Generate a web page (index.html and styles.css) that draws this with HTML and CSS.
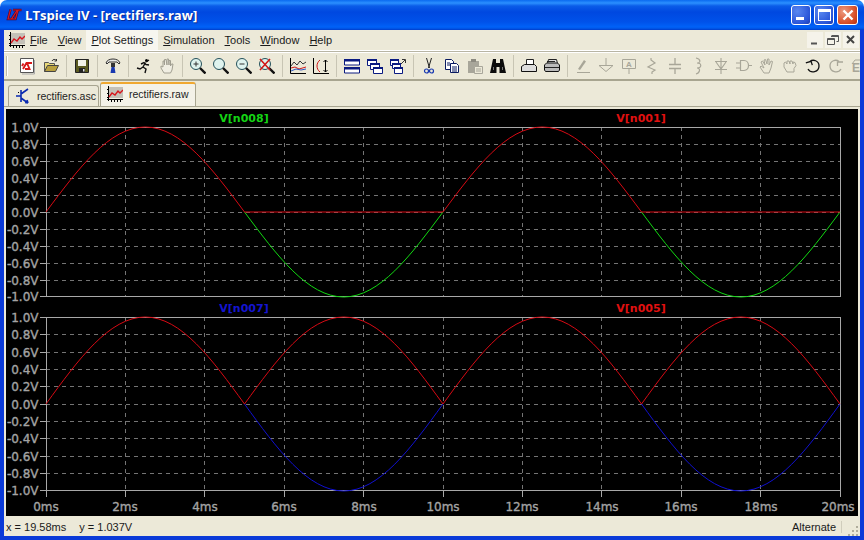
FILE: index.html
```html
<!DOCTYPE html>
<html lang="en">
<head>
<meta charset="utf-8">
<title>LTspice IV - [rectifiers.raw]</title>
<link rel="stylesheet" href="styles.css">
</head>
<body>
<svg class="defs" width="0" height="0" aria-hidden="true">
  <symbol id="i-plot" viewBox="0 0 16 16">
    <rect x="1" y="1" width="15" height="11" fill="#c4c1b8"/>
    <path d="M1.500 0v15M0 13.500h16M4.500 13v3M7.500 13v3M10.500 13v3M13.500 13v3M0 3.500h1M0 7.500h1M0 11.500h1" stroke="#000" fill="none"/>
    <path d="M2 11l3-4 3 2 3-4 2 2 3-3" stroke="#d8141c" stroke-width="1.300" fill="none"/>
  </symbol>
  <symbol id="i-mag" viewBox="0 0 16 16">
    <circle cx="6" cy="6" r="5.500" fill="#dff3ee" stroke="#24505a"/>
    <path d="M10 10l5.500 5.500" stroke="#111" stroke-width="2.400"/>
  </symbol>
</svg>

<div class="window">
  <header class="titlebar">
    <svg class="app-logo" viewBox="0 0 16 12" width="16" height="13"><path d="M4.500 1L2 10.500h6M7 1.500h8.500M12 1.500L9.500 10.500H5.500L11 2" fill="none" stroke="#3a0a40" stroke-width="2.400"/><path d="M4.500 1L2 10.500h6M7 1.500h8.500M12 1.500L9.500 10.500H5.500L11 2" fill="none" stroke="#d81820" stroke-width="1.200"/></svg>
    <span class="title">LTspice IV - [rectifiers.raw]</span>
    <div class="caption-buttons">
      <span class="cap cap-min"><i class="glyph-min"></i></span>
      <span class="cap cap-max"><i class="glyph-max"></i></span>
      <span class="cap cap-close"><svg viewBox="0 0 12 12" width="12" height="12"><path d="M1.500 1.500l9 9M10.500 1.500l-9 9" stroke="#fff" stroke-width="2.400"/></svg></span>
    </div>
  </header>

  <div class="frame">
    <nav class="menubar">
      <svg class="menu-icon" width="16" height="16"><use href="#i-plot"/></svg>
      <span class="menu"><u>F</u>ile</span>
      <span class="menu"><u>V</u>iew</span>
      <span class="menu menu-on"><u>P</u>lot Settings</span>
      <span class="menu"><u>S</u>imulation</span>
      <span class="menu"><u>T</u>ools</span>
      <span class="menu"><u>W</u>indow</span>
      <span class="menu"><u>H</u>elp</span>
      <div class="mdi-buttons">
        <span class="mdi"><svg viewBox="0 0 16 16" width="16" height="16"><path d="M4 11.500h6" stroke="#555" stroke-width="2"/></svg></span>
        <span class="mdi"><svg viewBox="0 0 16 16" width="16" height="16"><path d="M6.500 3.500h7v6h-2M6 4.500h7M2.500 6.500h7v6h-7zM2 7.500h8" fill="none" stroke="#555"/></svg></span>
        <span class="mdi"><svg viewBox="0 0 16 16" width="16" height="16"><path d="M4 4l7 7M11 4l-7 7" stroke="#444" stroke-width="2"/></svg></span>
      </div>
    </nav>

    <div class="toolbar">
      <span class="grip"></span>
      <span class="tb"><svg viewBox="0 0 16 16"><path d="M.5.500h13v14h-13z" fill="#fff" stroke="#555"/><path d="M14.500 2v14H2" fill="none" stroke="#aaa"/><path d="M3 11l3.500-6H12M5 11h4.500L7 5M3.500 5.500L2 8" fill="none" stroke="#d81818" stroke-width="1.900"/></svg></span>
      <span class="tb"><svg viewBox="0 0 16 16"><path d="M1.500 13.500v-9h4l1 1h5v2" fill="#e8d878" stroke="#555"/><path d="M1.500 13.500l3-6h11l-3 6z" fill="#b8a040" stroke="#444"/><path d="M9 3c1-2 3-2 4.500-.5M13.500 1v2h-2" fill="none" stroke="#333"/></svg></span>
      <span class="sep"></span>
      <span class="tb"><svg viewBox="0 0 16 16"><path d="M1.500 1.500h13v13h-13z" fill="#5a5a20" stroke="#222"/><rect x="4" y="2" width="8" height="6" fill="#f2f2e8"/><rect x="5" y="10" width="6" height="4" fill="#222"/><rect x="9" y="11" width="1.500" height="2.500" fill="#ddd"/></svg></span>
      <span class="sep"></span>
      <span class="tb"><svg viewBox="0 0 16 16"><path d="M1 5c1-3 4-4 7-4s6 1 7 4l-1 1-2-2H4L2 6z" fill="#e8e8e4" stroke="#333"/><path d="M6 5h4v4H6z" fill="#333"/><path d="M6.500 9h3l1 6h-5z" fill="#1838b0"/></svg></span>
      <span class="sep"></span>
      <span class="tb"><svg viewBox="0 0 16 16"><circle cx="10.500" cy="2.500" r="1.500"/><path d="M9.500 4.500L7 9l3 2-1 4M7 9l-3 2-3-1M5 6l3-1.500 2 2 3 .5M10 4l3-2" fill="none" stroke="#111" stroke-width="1.400"/></svg></span>
      <span class="tb"><svg viewBox="0 0 16 16"><path d="M5 15l-3-5V8l2 1V3l1 0 .5 4V1.500h1.500L8 7V1h1.500L10 7V2.500h1.500V8l1-2h1.500l-1 6-1.500 3z" fill="#f0eee2" stroke="#a09e90"/></svg></span>
      <span class="sep"></span>
      <span class="tb"><svg width="16" height="16"><use href="#i-mag"/><path d="M3.500 6h5M6 3.500v5" stroke="#333"/></svg></span>
      <span class="tb"><svg width="16" height="16"><use href="#i-mag"/></svg></span>
      <span class="tb"><svg width="16" height="16"><use href="#i-mag"/><path d="M3.500 6h5" stroke="#333"/></svg></span>
      <span class="tb"><svg width="16" height="16"><use href="#i-mag"/><path d="M1 1l10 11M11 1L1 12" stroke="#d01818" stroke-width="1.600"/></svg></span>
      <span class="sep"></span>
      <span class="tb"><svg viewBox="0 0 16 16"><path d="M.5 0v15.500H16M0 3.500h1M0 7.500h1M0 11.500h1M4.500 15v1M8.500 15v1M12.500 15v1" stroke="#000" fill="none"/><path d="M1 8l3-4 3 3 3-4 3 3 3-2" stroke="#333" fill="none"/><path d="M1 10l4-1 4 2 7-2" stroke="#d01818" fill="none"/><path d="M1 13l5-2 5 1 5-1" stroke="#3058c0" fill="none"/></svg></span>
      <span class="tb"><svg viewBox="0 0 16 16"><path d="M.5 0v15.500H16M0 3.500h1M0 7.500h1M0 11.500h1M4.500 15v1M8.500 15v1M12.500 15v1" stroke="#000" fill="none"/><path d="M7 2C3 5 3 11 7 14" stroke="#d01818" fill="none"/><path d="M12.500 2v12M10.500 4l2-2 2 2M10.500 12l2 2 2-2" stroke="#000" fill="none"/></svg></span>
      <span class="sep"></span>
      <span class="tb"><svg viewBox="0 0 16 16"><path d="M.5 1.500h15v5.500H.5zM.5 9.500h15v5.500H.5z" fill="#fff" stroke="#0a1a80"/><rect x="0" y="1" width="16" height="2.500" fill="#0a1a80"/><rect x="0" y="9" width="16" height="2.500" fill="#0a1a80"/></svg></span>
      <span class="tb"><svg viewBox="0 0 16 16"><g fill="#fff" stroke="#0a1a80"><path d="M.5 1.500h9v6h-9z"/><path d="M3.500 5.500h9v6h-9z"/><path d="M6.500 9.500h9v6h-9z"/></g><path d="M0 1h10v2H0zM3 5h10v2H3zM6 9h10v2H6z" fill="#0a1a80"/></svg></span>
      <span class="tb"><svg viewBox="0 0 16 16"><g fill="#fff" stroke="#0a1a80"><path d="M.5 1.500h8v6h-8z"/><path d="M2.500 5.500h8v5h-8z"/><path d="M4.500 9.500h8v6h-8z"/></g><path d="M0 1h9v2H0zM2 5h9v2H2zM4 9h9v2H4z" fill="#0a1a80"/><path d="M11 6l4-4M12 1.500h3.500V5" fill="none" stroke="#333"/></svg></span>
      <span class="sep"></span>
      <span class="tb"><svg viewBox="0 0 16 16"><path d="M5.500 0l3 10M10.500 0l-3 10" stroke="#222" fill="none"/><circle cx="5.500" cy="13" r="2" fill="none" stroke="#1838b0" stroke-width="1.200"/><circle cx="10.500" cy="13" r="2" fill="none" stroke="#1838b0" stroke-width="1.200"/></svg></span>
      <span class="tb"><svg viewBox="0 0 16 16"><path d="M1.500 1.500h6l2 2v8h-8z" fill="#fff" stroke="#0a1a60"/><path d="M6.500 5.500h6l2 2v7h-8z" fill="#fff" stroke="#0a1a60"/><path d="M3 5h3M3 7h3M8 9h5M8 11h5M8 13h5" stroke="#0a1a60"/></svg></span>
      <span class="tb"><svg viewBox="0 0 16 16"><path d="M1 3h11v12H1z" fill="#a8a69a"/><rect x="4" y="1" width="5" height="3" fill="#8c8a80"/><path d="M7.500 8.500h8v7h-8z" fill="#ece9d8" stroke="#a8a69a"/><path d="M9 11h5M9 13h5" stroke="#a8a69a"/></svg></span>
      <span class="tb"><svg viewBox="0 0 16 16"><path d="M3 1h3v4h4V1h3l3 14H9.500V9h-3v6H0z" fill="#0c0c0c"/><path d="M3 9h1v3H3zM12 9h1v3h-1z" fill="#777"/></svg></span>
      <span class="sep"></span>
      <span class="tb"><svg viewBox="0 0 16 16"><path d="M5.500 1.500h7v6h-7z" fill="#fff" stroke="#222"/><path d="M.5 8.500l3-2h10l2 2v5H.5z" fill="#ddd" stroke="#111"/></svg></span>
      <span class="tb"><svg viewBox="0 0 16 16"><path d="M4.500 1.500h8l1 4h-10z" fill="#ddd" stroke="#222"/><path d="M.5 7l2-2h11l2 2v5l-1 1.500H1.500L.5 12z" fill="#bbb" stroke="#111"/><path d="M1 9.500h14M3 3.500h8" stroke="#222"/></svg></span>
      <span class="sep"></span>
      <span class="tb dim"><svg viewBox="0 0 16 16"><path d="M3 11l6-9 2 1.500L5 12z" fill="#a8a698"/><path d="M2 14.500h13" stroke="#a8a698"/></svg></span>
      <span class="tb dim"><svg viewBox="0 0 16 16"><path d="M8 0v7M1 7.500h14L8 13.500z" fill="none" stroke="#a8a698"/></svg></span>
      <span class="tb dim"><svg viewBox="0 0 16 16"><path d="M1.500 1.500h13v9h-13zM8 10.500V16" fill="none" stroke="#a8a698"/><text x="8" y="9" class="ico-letter">A</text></svg></span>
      <span class="tb dim"><svg viewBox="0 0 16 16"><path d="M7 0v2l4 3-7 4 7 3-3 2v2" fill="none" stroke="#a8a698" stroke-width="1.200"/></svg></span>
      <span class="tb dim"><svg viewBox="0 0 16 16"><path d="M8 0v6.500M2 6.500h12M2 10.500h12M8 10.500V16" fill="none" stroke="#a8a698" stroke-width="1.300"/></svg></span>
      <span class="tb dim"><svg viewBox="0 0 16 16"><path d="M6 0c5 1 5 5 1 5 5 0 5 5 0 5 4 0 3 5-1 6" fill="none" stroke="#a8a698" stroke-width="1.200"/></svg></span>
      <span class="tb dim"><svg viewBox="0 0 16 16"><path d="M8 0v16M2 3.500h12M2 11.500h12M3 4l5 7 5-7" fill="none" stroke="#a8a698" stroke-width="1.100"/></svg></span>
      <span class="tb dim"><svg viewBox="0 0 16 16"><path d="M4.500 2.500H8c6 0 6 10 0 10H4.500zM0 5h4M0 10h4M12 7.500h4" fill="none" stroke="#a8a698" stroke-width="1.200"/></svg></span>
      <span class="tb dim"><svg viewBox="0 0 16 16"><path d="M5 15L1 9l1-1 3 2L2 4l1.500-1L6 7 5 2l1.500-.5L8 6l.5-5H10v6l2-4 1.500.5L12 10l-2 5z" fill="none" stroke="#a8a698"/></svg></span>
      <span class="tb dim"><svg viewBox="0 0 16 16"><path d="M5 14L2 9V5l1.500-1L5 6V3h2l1 3V3h2l1 3V4l2 .5 1 3-2 3V14z" fill="none" stroke="#a8a698"/></svg></span>
      <span class="tb"><svg viewBox="0 0 16 16"><path d="M5 3.500c3-2.500 9-1 9 4.500 0 6-8 8-11 3" fill="none" stroke="#111" stroke-width="1.300"/><path d="M1 4h5.500v4" fill="none" stroke="#111" stroke-width="1.300" transform="rotate(-18 4 5)"/></svg></span>
      <span class="tb dim"><svg viewBox="0 0 16 16"><path d="M11 3.500c-3-2.500-9-1-9 4.500 0 6 8 8 11 3" fill="none" stroke="#a8a698" stroke-width="1.300"/><path d="M15 4H9.500v4" fill="none" stroke="#a8a698" stroke-width="1.300"/></svg></span>
      <span class="tb dim"><svg viewBox="0 0 16 16"><path d="M1 6l3-4h6" fill="none" stroke="#a8a698"/><text x="1" y="14" class="ico-letter ico-big">E</text></svg></span>
    </div>

    <div class="tabstrip">
      <span class="tab">
        <svg viewBox="0 0 16 16" width="16" height="16"><path d="M0 8h5M5 2v12M5 6l7-5M5 10l7 5M12 15l-3-.5M12 15l-1-3" fill="none" stroke="#0a2ab0" stroke-width="1.600"/><path d="M2 4l1 1" stroke="#000"/></svg>
        rectifiers.asc
      </span>
      <span class="tab tab-on">
        <svg width="16" height="16"><use href="#i-plot"/></svg>
        rectifiers.raw
      </span>
    </div>

    <div class="plot-frame">
      <svg class="plot" viewBox="6 109 852 407" width="852" height="407" role="img" aria-label="Waveform plot">
        <g class="grid">
          <path d="M125.500 127V296M204.500 127V296M284.500 127V296M363.500 127V296M443.500 127V296M522.500 127V296M601.500 127V296M681.500 127V296M760.500 127V296"/>
          <path d="M46 144.500H840M46 161.500H840M46 178.500H840M46 195.500H840M46 212.500H840M46 229.500H840M46 246.500H840M46 263.500H840M46 280.500H840"/>
          <path d="M125.500 317V490M204.500 317V490M284.500 317V490M363.500 317V490M443.500 317V490M522.500 317V490M601.500 317V490M681.500 317V490M760.500 317V490"/>
          <path d="M46 334.500H840M46 352.500H840M46 369.500H840M46 386.500H840M46 404.500H840M46 421.500H840M46 438.500H840M46 456.500H840M46 473.500H840"/>
        </g>
        <g class="frame-lines">
          <rect x="46.500" y="127.500" width="794" height="169"/>
          <rect x="46.500" y="317.500" width="794" height="173"/>
          <path d="M40 127.500h6M40 144.500h6M40 161.500h6M40 178.500h6M40 195.500h6M40 212.500h6M40 229.500h6M40 246.500h6M40 263.500h6M40 280.500h6M40 296.500h6"/>
          <path d="M40 317.500h6M40 334.500h6M40 352.500h6M40 369.500h6M40 386.500h6M40 404.500h6M40 421.500h6M40 438.500h6M40 456.500h6M40 473.500h6M40 490.500h6"/>
          <path d="M46.500 491v6M125.500 491v6M204.500 491v6M284.500 491v6M363.500 491v6M443.500 491v6M522.500 491v6M601.500 491v6M681.500 491v6M760.500 491v6M840.500 491v6"/>
        </g>

        <g class="trace tr-green">
          <path d="M244.500 212c32.370 43.500 63.330 85 99.250 85c35.920 0 66.880-41.500 99.250-85"/>
          <path d="M641.500 212c32.370 43.500 63.330 85 99.250 85c35.920 0 66.880-41.500 99.250-85"/>
        </g>
        <g class="trace tr-red">
          <path d="M46 212c32.370-43.500 63.330-85 99.250-85c35.920 0 66.880 41.500 99.250 85H443c32.370-43.500 63.330-85 99.250-85c35.920 0 66.880 41.500 99.250 85H840"/>
        </g>
        <g class="trace tr-blue">
          <path d="M244.500 404c32.370 44.570 63.330 87 99.250 87c35.920 0 66.880-42.430 99.250-87"/>
          <path d="M641.500 404c32.370 44.570 63.330 87 99.250 87c35.920 0 66.880-42.430 99.250-87"/>
        </g>
        <g class="trace tr-red">
          <path d="M46 404c32.370-44.570 63.330-87 99.250-87c35.920 0 66.880 42.430 99.250 87c32.370-44.570 63.330-87 99.250-87c35.920 0 66.880 42.430 99.250 87c32.370-44.570 63.330-87 99.250-87c35.920 0 66.880 42.430 99.250 87c32.370-44.570 63.330-87 99.250-87c35.920 0 66.880 42.430 99.250 87"/>
        </g>

        <g class="trace-names">
          <text x="244" y="122" class="n-green">V[n008]</text>
          <text x="641" y="122" class="n-red">V[n001]</text>
          <text x="244" y="312" class="n-blue">V[n007]</text>
          <text x="641" y="312" class="n-red">V[n005]</text>
        </g>
        <g class="y-labels">
          <text x="38.500" y="132">1.0V</text><text x="38.500" y="149">0.8V</text><text x="38.500" y="166">0.6V</text><text x="38.500" y="183">0.4V</text><text x="38.500" y="200">0.2V</text><text x="38.500" y="217">0.0V</text><text x="38.500" y="234">-0.2V</text><text x="38.500" y="251">-0.4V</text><text x="38.500" y="268">-0.6V</text><text x="38.500" y="285">-0.8V</text><text x="38.500" y="301">-1.0V</text>
          <text x="38.500" y="322">1.0V</text><text x="38.500" y="339">0.8V</text><text x="38.500" y="357">0.6V</text><text x="38.500" y="374">0.4V</text><text x="38.500" y="391">0.2V</text><text x="38.500" y="409">0.0V</text><text x="38.500" y="426">-0.2V</text><text x="38.500" y="443">-0.4V</text><text x="38.500" y="461">-0.6V</text><text x="38.500" y="478">-0.8V</text><text x="38.500" y="495">-1.0V</text>
        </g>
        <g class="x-labels">
          <text x="46" y="511">0ms</text><text x="125" y="511">2ms</text><text x="205" y="511">4ms</text><text x="284" y="511">6ms</text><text x="364" y="511">8ms</text><text x="443" y="511">10ms</text><text x="522" y="511">12ms</text><text x="602" y="511">14ms</text><text x="681" y="511">16ms</text><text x="761" y="511">18ms</text><text x="838" y="511">20ms</text>
        </g>
      </svg>
    </div>

    <footer class="statusbar">
      <span class="status-left">x = 19.58ms<span class="status-gap"></span>y = 1.037V</span>
      <span class="status-right">Alternate</span>
      <svg class="size-grip" viewBox="0 0 12 12" width="12" height="12"><path d="M9 2h2v2H9zM5 6h2v2H5zM9 6h2v2H9zM1 10h2v2H1zM5 10h2v2H5zM9 10h2v2H9z" fill="#b0ad9c"/></svg>
    </footer>
  </div>
</div>
</body>
</html>
```

FILE: styles.css
```css
* { box-sizing: border-box; }
html, body { margin: 0; padding: 0; height: 100%; overflow: hidden; background: #fff; }
.defs { position: absolute; }

.window { width: 864px; height: 540px; display: flex; flex-direction: column; }

.titlebar {
  height: 30px; flex: none; display: flex; align-items: center;
  padding: 0 6px 1px 6px;
  border-radius: 7px 7px 0 0;
  background: linear-gradient(180deg, #0a6af0 0, #2b90ff 3px, #0a5ce8 6px, #0048e0 12px, #0052ea 22px, #0062f8 27px, #0050e0 29px, #0038c8 30px);
}
.app-logo { margin-right: 3px; flex: none; }
.title {
  font: bold 13.100px "Open Sans", sans-serif; color: #fff;
  text-shadow: 1px 1px 0 #0a2a90;
}
.caption-buttons { margin-left: auto; display: flex; gap: 3px; }
.cap {
  width: 20px; height: 20px; border: 1px solid #fff; border-radius: 3px;
  background: radial-gradient(circle at 30% 30%, #5a88f0, #2a55d8 70%, #1c3cb0);
  display: flex; align-items: center; justify-content: center; position: relative;
}
.cap-close { width: 21px; background: radial-gradient(circle at 30% 30%, #ec9a80, #d84e28 65%, #b83010); }
.glyph-min { width: 8px; height: 3px; background: #fff; position: absolute; left: 4px; bottom: 4px; }
.glyph-max { width: 13px; height: 12px; border: 1px solid #fff; border-top-width: 3px; }

.frame {
  flex: 1; min-height: 0; display: flex; flex-direction: column;
  background: #ece9d8;
  border: solid #0a3ad8; border-width: 0 4px 4px 4px;
}

.menubar {
  height: 21px; flex: none; display: flex; align-items: center;
  padding-left: 5px; border-bottom: 1px solid #fff;
  font: 11px "Liberation Sans", sans-serif; color: #1a1a1a;
}
.menu-icon { flex: none; }
.menu { padding: 3px 5px; line-height: 14px; }
.menu-on { background: #f7f6ef; }
.mdi-buttons { margin-left: auto; display: flex; gap: 2px; margin-right: 1px; }
.mdi { width: 16px; height: 16px; display: flex; background: #f5f3ea; }

.toolbar {
  height: 30px; flex: none; display: flex; align-items: center;
  border-top: 1px solid #b8b5a4;
  border-bottom: 2px solid #a8a590;
  box-shadow: inset 0 1px 0 #fff;
  overflow: hidden;
}
.grip { width: 12.500px; height: 20px; flex: none; position: relative; }
.grip::before { content: ""; position: absolute; left: 2px; top: 0; bottom: 0; width: 1px; background: #bdbaa8; box-shadow: 1px 0 0 #fff; }
.tb { width: 23px; height: 24px; flex: none; display: flex; align-items: center; justify-content: center; }
.tb svg { width: 16px; height: 16px; display: block; overflow: visible; }
.sep { width: 8px; height: 22px; flex: none; position: relative; }
.sep::before { content: ""; position: absolute; left: 3px; top: 0; bottom: 0; width: 1px; background: #c8c5b4; }
.ico-letter { font: bold 8px "Liberation Sans", sans-serif; fill: #a8a698; text-anchor: middle; }
.ico-big { font-size: 12px; text-anchor: start; }

.tabstrip {
  height: 26px; flex: none; display: flex; align-items: flex-end;
  padding-left: 4px; gap: 1px;
  border-bottom: 1px solid #a8a590;
}
.tab {
  height: 21px; width: 91px; display: flex; align-items: center; gap: 5px; padding: 0 0 0 7px;
  font: 10.500px "Liberation Sans", sans-serif; color: #222;
  border: 1px solid #a8a590; border-bottom: none; border-radius: 3px 3px 0 0; white-space: nowrap;
}
.tab svg { flex: none; }
.tab-on {
  height: 24px; width: 96px; background: #f4f2e8; padding: 0 0 3px 6px; gap: 6px;
  border-top: 2px solid #f0a830;
}

.plot-frame { flex: 1; min-height: 0; border: solid #ece9d8; border-width: 2px 2px 1px 2px; background: #000; }
.plot { display: block; background: #000; }
.grid path { stroke: #747474; stroke-width: 1; stroke-dasharray: 4 4; fill: none; shape-rendering: crispEdges; }
.frame-lines rect, .frame-lines path { fill: none; stroke: #a8a8a8; stroke-width: 1; shape-rendering: crispEdges; }
.trace path { fill: none; stroke-width: 1; }
.tr-red path { stroke: #d80a14; }
.tr-green path { stroke: #12d812; }
.tr-blue path { stroke: #1010d0; }
.trace-names text { font: bold 11px "DejaVu Sans", sans-serif; text-anchor: middle; }
.n-green { fill: #14d414; }
.n-red { fill: #e01010; }
.n-blue { fill: #1414d0; }
.y-labels text, .x-labels text {
  font: 12px "DejaVu Sans", sans-serif; fill: #a4a4a4; stroke: #a4a4a4; stroke-width: .35px;
}
.y-labels text { text-anchor: end; }
.x-labels text { text-anchor: middle; }

.statusbar {
  height: 19px; flex: none; display: flex; align-items: center;
  padding: 0 1px 0 2px;
  font: 11px "Liberation Sans", sans-serif; color: #1a1a1a;
}
.status-gap { display: inline-block; width: 13px; }
.status-right { margin-left: auto; padding-right: 5px; border-right: 1px solid #d0cdbc; }
.size-grip { margin-left: 5px; align-self: flex-end; }
```
